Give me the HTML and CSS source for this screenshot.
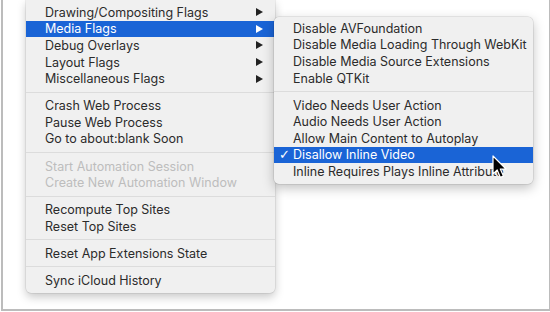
FILE: index.html
```html
<!DOCTYPE html>
<html lang="en">
<head>
    <meta charset="UTF-8">
    <title>Develop Menu - Experimental Features</title>
    <link rel="stylesheet" href="styles.css">
</head>
<body>

    <div class="frame">
        <div class="menu">
            <div class="menu-item">Drawing/Compositing Flags<span class="arrow"></span></div>
            <div class="menu-item selected">Media Flags<span class="arrow"></span></div>
            <div class="menu-item">Debug Overlays<span class="arrow"></span></div>
            <div class="menu-item">Layout Flags<span class="arrow"></span></div>
            <div class="menu-item">Miscellaneous Flags<span class="arrow"></span></div>
            <div class="separator"></div>
            <div class="menu-item">Crash Web Process</div>
            <div class="menu-item">Pause Web Process</div>
            <div class="menu-item">Go to about:blank Soon</div>
            <div class="separator"></div>
            <div class="menu-item disabled">Start Automation Session</div>
            <div class="menu-item disabled">Create New Automation Window</div>
            <div class="separator"></div>
            <div class="menu-item">Recompute Top Sites</div>
            <div class="menu-item">Reset Top Sites</div>
            <div class="separator"></div>
            <div class="menu-item">Reset App Extensions State</div>
            <div class="separator"></div>
            <div class="menu-item">Sync iCloud History</div>
        </div>

        <!-- submenu for Media Flags -->
        <div class="submenu">
            <div class="menu-item">Disable AVFoundation</div>
            <div class="menu-item">Disable Media Loading Through WebKit</div>
            <div class="menu-item">Disable Media Source Extensions</div>
            <div class="menu-item">Enable QTKit</div>
            <div class="separator"></div>
            <div class="menu-item">Video Needs User Action</div>
            <div class="menu-item">Audio Needs User Action</div>
            <div class="menu-item">Allow Main Content to Autoplay</div>
            <div class="menu-item selected"><span class="check">✓</span>Disallow Inline Video</div>
            <div class="menu-item">Inline Requires Plays Inline Attribute</div>
        </div>

        <svg class="cursor" width="17" height="25" viewBox="0 0 17 25">
            <path d="M1 1 L1 19 L5.2 15 L8.4 22.4 L11.4 21.1 L8.3 14 L14 14 Z" fill="#000" stroke="#fff" stroke-width="1.2" stroke-linejoin="round"/>
        </svg>
    </div>

</body>
</html>
```

FILE: styles.css
```css
body {
    margin: 0;
    background: #fff;
    font-family: Inter, "Liberation Sans", sans-serif;
    font-size: 12.5px;
    color: #2b2b2b;
}
.frame {
    position: relative;
    margin-left: 1px;
    width: 546px;
    height: 309px;
    border: solid #bcbcbc;
    border-width: 0 2px 2px 2px;
    overflow: hidden;
}
.menu {
    margin-left: 23px;
    width: 249px;
    padding: 4px 0 4px;
    background: #f0f0f0;
    border-radius: 0 0 5px 5px;
    box-shadow: 0 0 0 0.5px rgba(0,0,0,0.12), 0 4px 10px rgba(0,0,0,0.22);
}
.menu-item {
    display: flex;
    align-items: center;
    justify-content: space-between;
    height: 16.6px;
    padding: 0 12px 0 19px;
    white-space: nowrap;
}
.menu-item.selected {
    background: #1a64d6;
    color: #fff;
}
.menu-item.disabled {
    color: #bdbdbd;
}
.arrow {
    width: 0;
    height: 0;
    border-top: 4px solid transparent;
    border-bottom: 4px solid transparent;
    border-left: 7px solid #222;
}
.selected .arrow {
    border-left-color: #fff;
}
.separator {
    height: 1px;
    margin: 4.75px 0;
    background: #dcdcdc;
}
.submenu {
    position: absolute;
    left: 271px;
    top: 17px;
    width: 259px;
    padding: 3px 0 4px;
    background: #f0f0f0;
    border-radius: 5px;
    box-shadow: 0 0 0 0.5px rgba(0,0,0,0.14), 0 4px 12px rgba(0,0,0,0.25);
}
.submenu .menu-item {
    justify-content: flex-start;
    position: relative;
    padding-left: 19px;
}
.check {
    position: absolute;
    left: 5px;
    font-family: "DejaVu Sans", sans-serif;
    font-size: 13px;
    font-weight: bold;
}
.cursor {
    position: absolute;
    left: 489px;
    top: 155px;
}
```
